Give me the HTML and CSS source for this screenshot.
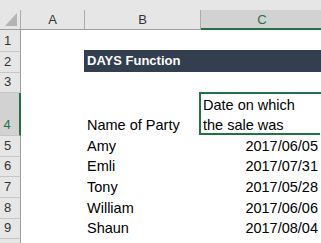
FILE: index.html
```html
<!DOCTYPE html>
<html lang="en">
<head>
    <meta charset="UTF-8">
    <title>DAYS Function</title>
    <link rel="stylesheet" href="styles.css">
</head>
<body>
    <div class="band"></div>
    <div class="sheet">
        <!-- header row -->
        <div class="corner">
            <svg width="20" height="19" viewBox="0 0 20 19"><polygon points="17,3 17,16 5,16" fill="#b4b4b4"/></svg>
        </div>
        <div class="col-head">A</div>
        <div class="col-head">B</div>
        <div class="col-head active">C</div>

        <div class="row-head">1</div>
        <div class="cell"></div>
        <div class="cell"></div>
        <div class="cell"></div>

        <div class="row-head">2</div>
        <div class="cell"></div>
        <div class="cell title first">DAYS Function</div>
        <div class="cell title"></div>

        <div class="row-head">3</div>
        <div class="cell"></div>
        <div class="cell"></div>
        <div class="cell"></div>

        <div class="row-head active">4</div>
        <div class="cell"></div>
        <div class="cell">Name of Party</div>
        <div class="cell wrap selected">Date on which the sale was<span class="handle"></span></div>

        <div class="row-head">5</div>
        <div class="cell"></div>
        <div class="cell">Amy</div>
        <div class="cell num">2017/06/05</div>

        <div class="row-head">6</div>
        <div class="cell"></div>
        <div class="cell">Emli</div>
        <div class="cell num">2017/07/31</div>

        <div class="row-head">7</div>
        <div class="cell"></div>
        <div class="cell">Tony</div>
        <div class="cell num">2017/05/28</div>

        <div class="row-head">8</div>
        <div class="cell"></div>
        <div class="cell">William</div>
        <div class="cell num">2017/06/06</div>

        <div class="row-head">9</div>
        <div class="cell"></div>
        <div class="cell">Shaun</div>
        <div class="cell num">2017/08/04</div>

        <!-- rangée 10, coupée par le bas de la fenêtre -->
        <div class="row-head"></div>
        <div class="cell"></div>
        <div class="cell"></div>
        <div class="cell"></div>
    </div>
</body>
</html>
```

FILE: styles.css
```css
body {
    margin: 0;
    background-color: #ffffff;
    overflow: hidden;
    font-family: "Liberation Sans", Arial, sans-serif;
}

/* bande grise au-dessus des en-têtes */
.band {
    height: 10px;
    background-color: #e6e6e6;
}

.sheet {
    display: grid;
    grid-template-columns: 21px 64px 116px 122px;
    grid-template-rows: 20px 22px 21px 20px 43px 21px 20px 21px 21px 20px 21px;
    width: 323px;
}

.corner {
    background-color: #e6e6e6;
    border-right: 1px solid #ababab;
    border-bottom: 1px solid #9e9e9e;
    box-sizing: border-box;
}

.corner svg {
    display: block;
}

.col-head {
    background-color: #e6e6e6;
    color: #333333;
    font-size: 13px;
    line-height: 19px;
    text-align: center;
    border-right: 1px solid #ababab;
    border-bottom: 1px solid #9e9e9e;
    box-sizing: border-box;
}

.col-head.active {
    background-color: #d2d2d2;
    color: #217346;
    border-right: none;
    border-bottom: 2px solid #217346;
}

.row-head {
    background-color: #e6e6e6;
    color: #333333;
    font-size: 13px;
    line-height: 20px;
    text-align: center;
    padding-right: 5px;
    border-right: 1px solid #9e9e9e;
    border-bottom: 1px solid #c6c6c6;
    box-sizing: border-box;
    display: flex;
    align-items: flex-end;
    justify-content: center;
}

.row-head.active {
    background-color: #d2d2d2;
    color: #217346;
    border-right: 2px solid #217346;
}

.cell {
    font-size: 14.5px;
    line-height: 20px;
    color: #000000;
    padding: 0 2px 1px;
    white-space: nowrap;
    display: flex;
    align-items: flex-end;
    position: relative;
}

.cell.num {
    justify-content: flex-end;
    padding-right: 5px;
}

.cell.wrap {
    white-space: normal;
    padding-right: 8px;
}

.cell.title {
    background-color: #333f4f;
    color: #ffffff;
    font-size: 13px;
    font-weight: bold;
    align-items: center;
    margin-top: -2px;
    margin-bottom: 1px;
    padding-bottom: 0;
}

.cell.title.first {
    margin-left: -1px;
    padding-left: 3px;
}

/* cadre vert de la cellule sélectionnée */
.cell.selected::after {
    content: "";
    position: absolute;
    top: -1px;
    left: -2px;
    right: -2px;
    bottom: 1px;
    border: 2px solid #217346;
}

.handle {
    position: absolute;
    right: -4px;
    bottom: -2px;
    width: 5px;
    height: 5px;
    background-color: #217346;
    border: 1px solid #ffffff;
    z-index: 1;
}
```
